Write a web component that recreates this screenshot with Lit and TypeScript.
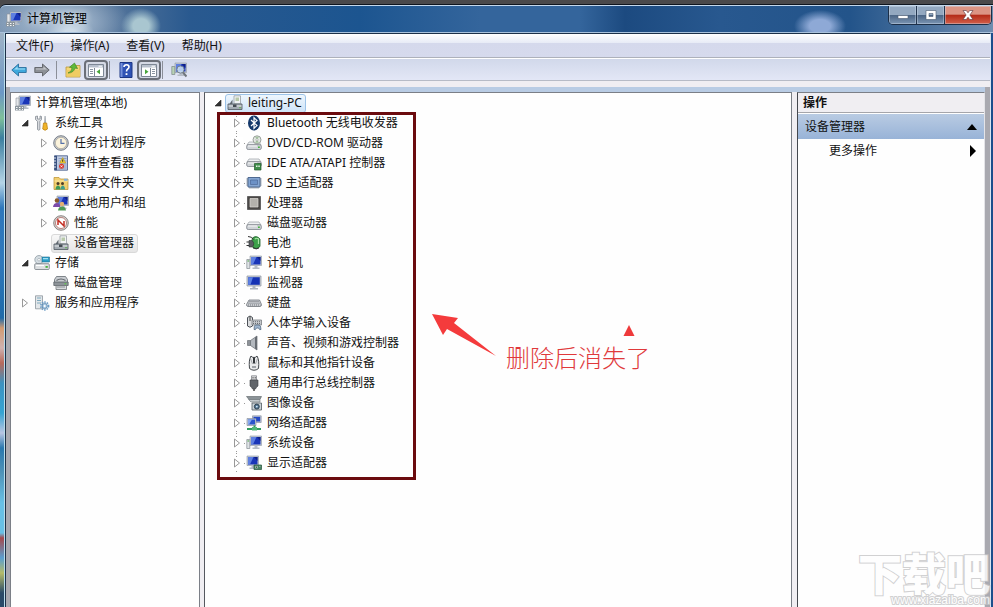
import { LitElement, html, svg, css, nothing, TemplateResult } from "lit";
import { customElement, property, state } from "lit/decorators.js";
import { classMap } from "lit/directives/class-map.js";

/* Shared pieces of the 16px device icons */
const screen = svg`
  <path d="M4 1h11.5v9.5H4z" fill="#c3cad3" stroke="#8f98a4" stroke-width=".6"/>
  <path d="M5 2h9.5v7.5H5z" fill="#1a36b8"/>
  <path d="M5 2h5.5L7 9.5H5z" fill="#5e7fe0"/>
  <path d="M11 2h3.5v4z" fill="#0e1f86"/>
  <path d="M8.500 10.500h3v2h-3zM6.500 12.500h7v1.500h-7z" fill="#b5bcc6"/>`;
const drive = svg`
  <path d="M1 9l2-3h10l2 3z" fill="#eef0f2" stroke="#9a9fa5" stroke-width=".7"/>
  <rect x=".7" y="8.700" width="14.600" height="4.800" rx="1.500" fill="#cfd3d7" stroke="#7d838a" stroke-width=".8"/>
  <path d="M2 10h9" stroke="#f8f8f8"/>
  <path d="M12 10.500h1.800v1.600H12z" fill="#45b33c"/>`;

const shapes: Record<string, TemplateResult> = {
  manage: svg`${screen}<path d="M1 3h3v8H1z" fill="#e4e7ea" stroke="#8b929b" stroke-width=".6"/>
    <path d="M0 11h9v4.500H0z" fill="#8d979f"/><path d="M1 12.500h1.500M4 12.500h1.500M7 12.500h1M1 14.500h1.500M4 14.500h1.500M7 14.500h1" stroke="#f3f5f6"/>`,
  tools: svg`<path d="M1.500 1.500v3l2 2v8q1.200 1.500 2.400 0v-8l1.600-2v-3L6 1v3H3.500V1z" fill="#d7dade" stroke="#777e86" stroke-width=".7"/>
    <path d="M10.500 1h1.200l.4 7h-2z" fill="#a6acb3"/><path d="M9.500 8h3.200l.8 6q-2.400 2.500-4.800 0z" fill="#f0b429" stroke="#b67b0c" stroke-width=".7"/>`,
  clock: svg`<circle cx="8" cy="8" r="7.300" fill="#c7ccd3" stroke="#6d747d" stroke-width=".9"/><circle cx="8" cy="8" r="5.700" fill="#fbf3dc" stroke="#9b968a" stroke-width=".6"/>
    <path d="M8 4v4.400h3.500" fill="none" stroke="#5470a8" stroke-width="1.200"/>`,
  events: svg`<path d="M1.500.8h13v14.400h-13z" fill="#bfcbe3" stroke="#50648e" stroke-width=".9"/><path d="M1.500.8h2.500v14.400H1.500z" fill="#39517f"/>
    <path d="M1 3h2M1 6h2M1 9h2M1 12h2" stroke="#e6ebf5"/>
    <path d="M5.500 3.500h8M5.500 6h8M5.500 9h8M5.500 11h8M5.500 13h8" stroke="#6f83ad" stroke-width=".6"/><path d="M9.700 2.500l3 5.500H6.700z" fill="#f6d431" stroke="#a98612" stroke-width=".5"/>
    <path d="M9.700 4.500v2.300" stroke="#333"/><circle cx="8.500" cy="11.300" r="2.500" fill="#d9372c"/><path d="M7.500 10.300l2 2m0-2l-2 2" stroke="#fff" stroke-width=".8"/>`,
  share: svg`<path d="M1 2.500h5L7.500 4H15v10.500H1z" fill="#f1cf70" stroke="#b98e2c" stroke-width=".7"/><path d="M1.500 5.500H15v1H1.500z" fill="#fbe7a3"/>
    <path d="M11 3.800h3.500v2H11z" fill="#7fb1e0"/>
    <circle cx="5" cy="8.500" r="1.500" fill="#4d3c28"/><circle cx="9.500" cy="8.500" r="1.500" fill="#4d3c28"/>
    <path d="M2.500 14.500q0-3.500 2.500-4Q7.500 11 7.500 14.500z" fill="#3f9a58"/><path d="M7.500 14.500q0-3.500 2.300-4Q12 11 12 14.500z" fill="#3f9f8c"/>`,
  users: svg`${screen}<circle cx="4" cy="5.500" r="2.300" fill="#8a5a2c"/><path d="M0 12q.5-4 4-4 3 0 3.500 4z" fill="#7b4aa8"/>
    <circle cx="9" cy="9" r="2.200" fill="#e2b072"/><path d="M5 15.500q.5-4 4-4t4 4z" fill="#4e9b56"/>`,
  perf: svg`<circle cx="8" cy="8" r="7.300" fill="#d7d4d2" stroke="#726c69" stroke-width=".8"/><circle cx="8" cy="8" r="5.500" fill="#fff" stroke="#9a4038" stroke-width=".6"/>
    <path d="M5 10V5l6 6V6" fill="none" stroke="#c22b20" stroke-width="1.500"/>`,
  devmgr: svg`<path d="M7 .8h6.500v8H7z" fill="#f2f4f5" stroke="#8b9298" stroke-width=".7"/><path d="M8.500 2.500h3.500v3.500H8.500z" fill="#b7c9a9"/>
    <path d="M2.500 9l3-4.500V9z" fill="#5f676e"/><path d="M1 9h14v5.500H1z" fill="#a3abb2" stroke="#5b636b" stroke-width=".9"/>
    <path d="M1.500 11h13" stroke="#e3e6e8"/><path d="M6 9.500h3.500v2.500H6z" fill="#454c53"/><path d="M12.300 12h1.500v1.300h-1.500z" fill="#60b34e"/>`,
  storage: svg`<circle cx="5" cy="4.700" r="4.200" fill="#d5dde2" stroke="#87939c" stroke-width=".7"/><circle cx="5" cy="4.700" r="1.300" fill="#fff" stroke="#87939c" stroke-width=".5"/>
    <path d="M8 2h7.500v5H8z" fill="#2c9fc9" stroke="#1e6d8d" stroke-width=".6"/><path d="M9 3h5v1.300H9z" fill="#9fe0f2"/>
    <rect x=".7" y="8.700" width="14.600" height="5.800" rx="1" fill="#dde0e2" stroke="#767d84" stroke-width=".8"/><path d="M2 10.500h8" stroke="#fff"/><path d="M11.500 11h2.300v1.800h-2.300z" fill="#48b13d"/>`,
  disks: svg`<path d="M1.500 4.500L3.500 1.500h9l2 3v4h-13z" fill="#c8ccd0" stroke="#666c72" stroke-width=".8"/><path d="M3.500 5.500q4.500-3 9 0" fill="none" stroke="#5d6369" stroke-width="1.200"/>
    <path d="M.8 7h14.400v3.500H.8z" fill="#8d9398" stroke="#555b60" stroke-width=".7"/><path d="M3 10.500h10.500v4H3z" fill="#d9dcde" stroke="#61676c" stroke-width=".7"/><path d="M4 12h8" stroke="#8b9095"/><path d="M11.500 8h1.800v1.500h-1.800z" fill="#63c053"/>`,
  services: svg`<path d="M1.500.8h7v13h-7z" fill="#e3e7ea" stroke="#8c959d" stroke-width=".8"/><path d="M3 3h4M3 5.500h4M3 8h4" stroke="#7fa9bd"/>
    <circle cx="10.700" cy="11" r="3.900" fill="none" stroke="#6d9dc6" stroke-width="1.600" stroke-dasharray="1.500 1"/><circle cx="10.700" cy="11" r="2.600" fill="#aecbe3" stroke="#5384ad" stroke-width=".8"/><circle cx="10.700" cy="11" r="1" fill="#fff"/>`,
  bluetooth: svg`<ellipse cx="8" cy="8" rx="6" ry="7.600" fill="#15396b"/><path d="M5 5l6 5.600L8 13.300V2.700l3 2.700L5 11" fill="none" stroke="#fff" stroke-width="1.200"/>`,
  dvd: svg`<g transform="translate(0 1)">${drive}</g><circle cx="11" cy="4.800" r="4" fill="#e2e8e2" stroke="#858c88" stroke-width=".8"/><path d="M11 4.800L9 1.800h4zM11 4.800L9 7.800h4z" fill="#a4c39f"/><circle cx="11" cy="4.800" r="1.100" fill="#fff" stroke="#888" stroke-width=".5"/>`,
  ide: svg`<g transform="translate(0 -2)">${drive}</g><path d="M8.500 8.500h6.500v6.500H8.500z" fill="#3f8d4b" stroke="#245a2d" stroke-width=".7"/><path d="M10 10.500h1.500v1.500H10zM12.300 10.500h1.500v1.500h-1.500zM10 13h3.800" fill="#e6f3e4"/>`,
  sd: svg`<path d="M2 2.500h12v9.500H2z" fill="#85a6d3" stroke="#4f6a91"/><path d="M4.500 5h7v4.500h-7z" fill="#6c91c6" stroke="#45628e" stroke-width=".6"/>
    <path d="M.5 4h1.500M.5 6h1.500M.5 8h1.500M.5 10h1.500M14 4h1.500M14 6h1.500M14 8h1.500M14 10h1.500" stroke="#5d6d83"/><path d="M4 12v1.500M6 12v1.500M8 12v1.500M10 12v1.500M12 12v1.500" stroke="#5d6d83"/>`,
  cpu: svg`<path d="M1.500 1.500h13v13h-13z" fill="#3c3b3a" stroke="#2b2b2b" stroke-dasharray="1 1"/><path d="M2 2h12v12H2z" fill="#4a4846"/><path d="M4 3.500h8v8.500H4z" fill="#b3b1ac" stroke="#dcdad6" stroke-width=".7"/>`,
  disk: svg`<g transform="translate(0 1)">${drive}</g>`,
  battery: svg`<path d="M6 3.500q4-4 8 .5v7.500q-3 3.500-7 1.500z" fill="#3da24a" stroke="#1d5d28" stroke-width=".8"/><path d="M9 4q2-1.500 3.500 0v5" fill="none" stroke="#a8e4a6" stroke-width="1.200"/>
    <path d="M.5 7h3M.5 10.500h3" stroke="#333" stroke-width="1.200"/><path d="M3 5.500h3q3.500 3.300 0 6.500H3z" fill="#5b5e62" stroke="#2e3033" stroke-width=".6"/><path d="M2 1.500q4 0 5.500 3M7 12.500q3 2.500 6 .5" fill="none" stroke="#333"/>`,
  computer: svg`${screen}<path d="M.8 4.500h3v9h-3z" fill="#dfe3e6" stroke="#858c94" stroke-width=".7"/><path d="M1.500 6h1.600" stroke="#4da544"/>`,
  monitor: svg`<path d="M1 1h14v10H1z" fill="#ccd2d9" stroke="#8a929d" stroke-width=".7"/><path d="M2.200 2.200h11.600v7.600H2.200z" fill="#1432b4"/><path d="M2.200 2.200H7L4.500 9.800H2.200z" fill="#5c80e2"/>
    <path d="M6.500 11h3v2h-3zM4 13h8v1.500H4z" fill="#adb5bf"/>`,
  keyboard: svg`<path d="M3 5h10.500l2 4.500q0 2-1.500 2H2q-1.500 0-1.500-2z" fill="#c9ccd0" stroke="#70757b" stroke-width=".8"/><path d="M3.500 6.500h10M2.500 8.200h11.500M2 10h12.500" stroke="#72777d" stroke-dasharray="1 1"/>`,
  hid: svg`<path d="M1.500 2.500q2.500-3 5 0v8.500q-2.500 2.500-5 0z" fill="#dadcde" stroke="#4b5056"/><path d="M4 1.500v4.500" stroke="#444"/><path d="M6 5h9.500v5H6z" fill="#c6c9cd" stroke="#6b7076" stroke-width=".7"/><path d="M7 6.700h8M7 8.500h8" stroke="#666b71" stroke-dasharray="1 1"/>
    <path d="M8 14.500q0-4.500 1.500-4.500h3.500q2 0 2 4.500-1.500 1-2.500-1.500h-2Q9.500 15.500 8 14.500z" fill="#9fb6cf" stroke="#4c6179" stroke-width=".7"/>`,
  sound: svg`<path d="M1.500 5.500h3v5h-3z" fill="#8d9298" stroke="#5c6167" stroke-width=".6"/><path d="M4.500 5.500L11 1v14l-6.500-4.500z" fill="#b3b8be" stroke="#666b71" stroke-width=".7"/><path d="M9 2.500L11 1v14l-2-1.500z" fill="#676c72"/>`,
  mouse: svg`<path d="M3.500 13.500Q2.500 5 5 1q1 1.500 3 1.500T11 1q2.500 4 1.500 12.500-4.500 3.500-9 0z" fill="#e8e9ea" stroke="#44484d"/><path d="M7 2.500h2v6H7z" fill="#33373b"/><path d="M4.500 3.500L6.500 9M11.500 3.500L9.500 9" stroke="#8a8e93" stroke-width=".7"/><path d="M6 11h4v2H6z" fill="#9da1a6"/>`,
  usb: svg`<path d="M5.500.8h5V5h-5z" fill="#dfe1e3" stroke="#72767b" stroke-width=".7"/><path d="M6.500 2h1v1.500h-1zM8.700 2h1v1.500h-1z" fill="#555"/><path d="M4 5h8v6q-2 1.500-2.500 3h-3Q6 12.500 4 11z" fill="#62666b" stroke="#3c3f43" stroke-width=".6"/><path d="M8 14v2" stroke="#444" stroke-width="1.500"/>`,
  imaging: svg`<path d="M.5 1.500h15l-1.500 3H3z" fill="#8b9397" stroke="#596165" stroke-width=".6"/><path d="M2.500 4.500H14V7H5z" fill="#c4cacd" stroke="#686f73" stroke-width=".6"/>
    <path d="M6 8h9.500v7H6z" fill="#cad3d8" stroke="#505a61" stroke-width=".8"/><circle cx="10.800" cy="11.600" r="2.500" fill="#4f7392" stroke="#26333e" stroke-width=".8"/><circle cx="10.800" cy="11.600" r=".9" fill="#d5e9f5"/>`,
  network: svg`<path d="M6.500.8h8.700v6.700H6.500z" fill="#c4cbd6" stroke="#7c8797" stroke-width=".6"/><path d="M7.500 1.800h6.700v4.700H7.500z" fill="#2449c6"/>
    <path d="M1 3.500h9v7H1z" fill="#c4cbd6" stroke="#7c8797" stroke-width=".6"/><path d="M2 4.500h7v5H2z" fill="#2a54cd"/><path d="M2 4.500h4L3 9.500H2z" fill="#86a7ee"/>
    <path d="M7.500 10.500h2V13h-2zM1 13h14v2H1z" fill="#2f9c5c"/><path d="M6 12h5v3.500H6z" fill="#53b97b"/>`,
  display: svg`<g transform="translate(-3 0)">${screen}</g><path d="M8 10h7.500v4.500H8z" fill="#4a8465" stroke="#24503a" stroke-width=".7"/><path d="M9.500 11.300h2v1.800h-2zM13 11.300h1.500" stroke="#cfe3d6" fill="#24352c" stroke-width=".6"/>`,
  back: svg`<path d="M.8 8l6.700-6v3.500h7.700v5H7.500V14z" fill="#3fa9dd" stroke="#2b6f9d" stroke-width=".9"/><path d="M3 7.500L6.500 4.500v2h7.500v1z" fill="#a5dff6"/>`,
  forward: svg`<path d="M15.200 8L8.500 2v3.500H.8v5h7.700V14z" fill="#8d9197" stroke="#5d6167" stroke-width=".9"/><path d="M13 7.500L9.500 4.500v2H2v1z" fill="#c3c6cb"/>`,
  up: svg`<path d="M1 5h5l1-1.500h8V15H1z" fill="#f4d777" stroke="#b9953a" stroke-width=".8"/><path d="M1.500 8H15v6.500H1.500z" fill="#efcc63"/><path d="M3 11Q7 10 7 5.500L4.500 5.200 9.500 1l3 5.500-2.500-.4Q8.500 11 3 11z" fill="#5fb93c" stroke="#34801d" stroke-width=".6"/>`,
  paneLeft: svg`<path d="M.5 2.500h15v12H.5z" fill="#fff" stroke="#7d8794"/><path d="M1 3h14v2.500H1z" fill="#b8c0cc"/><path d="M10.500 4.200h3.500" stroke="#fff"/><path d="M6.500 6v8.500" stroke="#7d8794"/><path d="M2 7.500h3M2 9.500h3M2 11.500h3" stroke="#8b95a2"/><path d="M12 7.200v5L8.500 9.700z" fill="#48a53a"/>`,
  paneRight: svg`<path d="M.5 2.500h15v12H.5z" fill="#fff" stroke="#7d8794"/><path d="M1 3h14v2.500H1z" fill="#b8c0cc"/><path d="M10.500 4.200h3.500" stroke="#fff"/><path d="M9.500 6v8.500" stroke="#7d8794"/><path d="M11 7.500h3M11 9.500h3M11 11.500h3" stroke="#8b95a2"/><path d="M4 7.200v5l3.500-2.500z" fill="#48a53a"/>`,
  help: svg`<path d="M2 .5h12v15H2z" fill="#2f52b5" stroke="#1c3685"/><path d="M2.500 1h2v14h-2z" fill="#7490dc"/><path d="M6 5q0-2.300 2.500-2.300T11 5q0 1.300-1.500 2.200-1 .6-1 2.300" fill="none" stroke="#fff" stroke-width="1.600"/><path d="M7.600 11.200h1.800V13H7.600z" fill="#fff"/>`,
  scan: svg`${screen}<path d="M.8 4.500h3v8h-3z" fill="#b8d3b4" stroke="#7c8788" stroke-width=".7"/><circle cx="9.500" cy="7.500" r="3.600" fill="#cfe5f6" fill-opacity=".85" stroke="#75828f"/><path d="M12 10.500l3.500 4" stroke="#70767d" stroke-width="2"/>`,
};

const icon = (name: string) =>
  html`<svg class="icon" viewBox="0 0 16 16" aria-hidden="true">${shapes[name]}</svg>`;

interface Node {
  label: string;
  icon: string;
  open?: boolean;
  selected?: boolean;
  children?: Node[];
}

const leaf = (icon: string, label: string): Node => ({ icon, label, children: [] });

const consoleTree: Node = {
  label: "计算机管理(本地)",
  icon: "manage",
  open: true,
  children: [
    {
      label: "系统工具", icon: "tools", open: true,
      children: [
        leaf("clock", "任务计划程序"),
        leaf("events", "事件查看器"),
        leaf("share", "共享文件夹"),
        leaf("users", "本地用户和组"),
        leaf("perf", "性能"),
        { label: "设备管理器", icon: "devmgr", selected: true },
      ],
    },
    { label: "存储", icon: "storage", open: true, children: [{ label: "磁盘管理", icon: "disks" }] },
    leaf("services", "服务和应用程序"),
  ],
};

const deviceTree: Node = {
  label: "leiting-PC",
  icon: "devmgr",
  open: true,
  selected: true,
  children: [
    leaf("bluetooth", "Bluetooth 无线电收发器"),
    leaf("dvd", "DVD/CD-ROM 驱动器"),
    leaf("ide", "IDE ATA/ATAPI 控制器"),
    leaf("sd", "SD 主适配器"),
    leaf("cpu", "处理器"),
    leaf("disk", "磁盘驱动器"),
    leaf("battery", "电池"),
    leaf("computer", "计算机"),
    leaf("monitor", "监视器"),
    leaf("keyboard", "键盘"),
    leaf("hid", "人体学输入设备"),
    leaf("sound", "声音、视频和游戏控制器"),
    leaf("mouse", "鼠标和其他指针设备"),
    leaf("usb", "通用串行总线控制器"),
    leaf("imaging", "图像设备"),
    leaf("network", "网络适配器"),
    leaf("computer", "系统设备"),
    leaf("display", "显示适配器"),
  ],
};

const base = css`
  * { box-sizing: border-box; }
  button {
    font: inherit;
    color: inherit;
    background: none;
    border: 0;
    margin: 0;
    padding: 0;
  }
  .icon { width: 16px; height: 16px; flex: none; display: block; }
`;

@customElement("tree-view")
class TreeView extends LitElement {
  @property({ attribute: false }) root!: Node;
  @property({ type: Boolean }) lines = false;
  @property({ type: Boolean }) rootToggle = false;
  @state() private toggled = new Set<Node>();

  static styles = [base, css`
    :host { display: block; }
    ul { list-style: none; margin: 0; padding: 0; }
    ul ul { padding-left: 19px; }
    .bare > ul > li > ul { padding-left: 6px; }
    .row { display: flex; align-items: center; height: 20px; }
    .twisty, .blank { width: 12px; height: 12px; margin-right: 1px; flex: none; }
    .twisty { display: flex; align-items: center; justify-content: center; }
    .twisty svg { width: 8px; height: 10px; }
    .label {
      display: flex;
      align-items: center;
      gap: 5px;
      height: 19px;
      padding: 0 3px 0 1px;
      border: 1px solid transparent;
      border-radius: 3px;
      white-space: nowrap;
    }
    .selected { border-color: #d9d9d9; background: linear-gradient(#f8f8f8, #e5e5e5); }
    .lines .selected { border-color: #9cc3e8; background: linear-gradient(#eef6fd, #cfe4f8); }
    .lines ul ul .row {
      background:
        repeating-linear-gradient(#999 0 1px, transparent 1px 3px) 5px 0 / 1px 20px no-repeat,
        repeating-linear-gradient(90deg, #999 0 1px, transparent 1px 2px) 11px 10px / 4px 1px no-repeat;
    }
    .lines .twisty { background: #fff; }
  `];

  private toggle(node: Node) {
    const next = new Set(this.toggled);
    next.has(node) ? next.delete(node) : next.add(node);
    this.toggled = next;
  }

  private node(n: Node, isRoot: boolean): TemplateResult {
    const open = !!n.open !== this.toggled.has(n);
    const arrow = open
      ? svg`<path d="M7 2v6H1z" fill="#333" stroke="#222" stroke-width=".6"/>`
      : svg`<path d="M1.500 1v8L6.500 5z" fill="#fff" stroke="#999"/>`;
    const toggle = n.children
      ? html`<button class="twisty" aria-label=${`${open ? "折叠" : "展开"} ${n.label}`} @click=${() => this.toggle(n)}>
          <svg viewBox="0 0 8 10">${arrow}</svg></button>`
      : html`<span class="blank"></span>`;
    return html`<li>
      <div class="row">
        ${isRoot && !this.rootToggle ? nothing : toggle}
        <button class=${classMap({ label: true, selected: !!n.selected })}>${icon(n.icon)}<span>${n.label}</span></button>
      </div>
      ${open && n.children?.length ? html`<ul>${n.children.map((c) => this.node(c, false))}</ul>` : nothing}
    </li>`;
  }

  render() {
    return html`<div class=${classMap({ lines: this.lines, bare: !this.rootToggle })}>
      <ul>${this.node(this.root, true)}</ul>
    </div>`;
  }
}

@customElement("app-root")
class AppRoot extends LitElement {
  static styles = [base, css`
    :host {
      display: block;
      font: 12px/16px "Noto Sans", "Noto Sans CJK SC", sans-serif;
      color: #111;
    }
    .desktop {
      display: flex;
      flex-direction: column;
      height: 100vh;
      overflow: hidden;
      border-top: 4px solid #4a494b;
      background: #4a494b;
    }
    .window {
      flex: 1;
      min-height: 0;
      display: flex;
      flex-direction: column;
      border-top: 1px solid #10161f;
      border-radius: 6px 0 0 0;
      background: #28588e;
    }
    .title {
      height: 28px;
      flex: none;
      display: flex;
      align-items: flex-start;
      border-top: 1px solid #c4d8ec;
      border-bottom: 1px solid #a9c2dc;
      border-radius: 6px 0 0 0;
      padding-left: 6px;
      background:
        radial-gradient(20px 18px at 141px 20px, #a9c6d0 0 40%, transparent),
        radial-gradient(24px 14px at 70px 26px, #cddbe8 20%, transparent),
        radial-gradient(70px 34px at 60px 16px, #9fb5cc 30%, transparent),
        radial-gradient(26px 16px at 820px 20px, #8ea9d6 40%, transparent),
        linear-gradient(90deg, #7993b0 0, #66809f 80px, #29598f 190px, #1c5590 360px, #34659c 480px, #34659c 580px, #1c4a80 625px, #28588f 720px, #23548a 850px, #6f8db0);
    }
    .caption {
      flex: 1;
      display: flex;
      align-items: center;
      gap: 5px;
      height: 26px;
      margin: 0;
      font: inherit;
      color: #000;
      text-shadow: 0 0 6px #fff8, 0 0 8px #fff8;
    }
    .controls {
      display: flex;
      margin-right: 1px;
      border: 1px solid #1c2f48;
      border-top: 0;
      border-radius: 0 0 5px 5px;
      overflow: hidden;
    }
    .controls button {
      width: 28px;
      height: 18px;
      display: flex;
      align-items: center;
      justify-content: center;
      border-right: 1px solid #23364f;
      background: linear-gradient(#93a8c0 0 48%, #4b6585 52%, #7b95b3);
      box-shadow: inset 0 0 0 1px #d5e2f066;
    }
    .controls .close { width: 46px; border: 0; background: linear-gradient(#dc9484 0 45%, #b52c19 52%, #d3604a); }
    .controls svg { width: 14px; height: 12px; }
    .frame { flex: 1; min-height: 0; display: flex; background: #1c4f8c; }
    .edge {
      width: 5px;
      flex: none;
      border-right: 1px solid #b9dcea;
      background: linear-gradient(#9fb3c6 0, #6c97c5 60px, #7fc09a 85px, #3c7fa0 105px, #b5d4e6 150px, #2e77bb 175px, #2f78bb 230px, #1f6aa8 285px, #d29b72 295px, #cfb2b0 315px, #b8695a 330px, #3d92c0 350px, #35a4d3 380px, #b9c5e2 400px, #2a78ae 415px, #4f93b8 440px, #68c0e5 470px, #68c0e5 500px, #a5494c 505px, #5a9fd0 525px, #b5bb6a 540px, #2a4a68 560px, #2a4a68);
    }
    .client {
      flex: 1;
      min-width: 0;
      display: flex;
      flex-direction: column;
      border: 1px solid #1c3048;
      border-bottom: 0;
      border-right: 1px solid #d9e6f2;
      margin-right: 2px;
      background: #f0eef2;
    }
    .menu {
      height: 24px;
      flex: none;
      display: flex;
      align-items: center;
      gap: 17px;
      padding: 0 10px;
      border-bottom: 1px solid #adb1bb;
      background: linear-gradient(#fff, #e7ebf6 9px, #d5d9ec 9px, #d6daed);
    }
    .toolbar {
      height: 23px;
      flex: none;
      display: flex;
      align-items: center;
      padding-left: 5px;
      border-top: 1px solid #fff;
      border-bottom: 1px solid #b7bbc6;
      background: linear-gradient(#d1d8ea, #e3e7f6);
    }
    .history { display: flex; gap: 7px; margin-right: 6px; }
    .tool { margin-right: 3px; }
    .sep { width: 1px; height: 18px; background: #8b8f99; margin-right: 8px; }
    .toggle {
      width: 24px;
      height: 20px;
      display: flex;
      align-items: center;
      justify-content: center;
      margin-right: 1px;
      border: 2px solid #6b6f78;
      border-radius: 4px;
      background: #d5d9e4;
    }
    .body {
      flex: 1;
      min-height: 0;
      margin-top: 6px;
      padding-top: 5px;
      display: flex;
      border: solid #a9a9b0;
      border-width: 0 5px 0 4px;
      background: linear-gradient(#b9cce4 5px, #f0eef2 5px);
    }
    .pane {
      background: #fefefe;
      border: 1px solid #7b7f87;
      border-bottom: 0;
      min-height: 0;
    }
    .nav { width: 190px; flex: none; margin-right: 4px; padding-left: 2px; }
    .main { flex: 1; min-width: 0; margin-right: 5px; position: relative; padding-left: 7px; border-left-color: #55585f; }
    .actions { width: 188px; flex: none; border-left: 1px solid #44474d; border-right-color: #e4e4e8; }
    .mark {
      position: absolute;
      left: 12px;
      top: 19px;
      width: 199px;
      height: 368px;
      border: 3px solid #6b0b0e;
      pointer-events: none;
    }
    .arrow { position: absolute; left: 226px; top: 220px; width: 68px; height: 46px; }
    .note {
      position: absolute;
      left: 301px;
      top: 248px;
      margin: 0;
      font: 300 24px/32px "Noto Sans CJK SC", sans-serif;
      color: #e0393b;
      white-space: nowrap;
    }
    .peak { position: absolute; left: 418px; top: 232px; width: 12px; height: 11px; }
    .actions h2 {
      margin: 0;
      height: 20px;
      padding: 1px 5px;
      font: bold 12px/18px "Noto Sans", "Noto Sans CJK SC", sans-serif;
      background: #f0eef2;
      border-bottom: 1px solid #a5a5aa;
    }
    .group, .more {
      width: 100%;
      height: 25px;
      display: flex;
      align-items: center;
      justify-content: space-between;
      padding: 0 7px;
    }
    .group { margin-top: 1px; background: linear-gradient(#b9cbe3, #98b3d7); }
    .more { height: 24px; padding-left: 31px; }
    .actions svg { width: 10px; height: 12px; }
    .brand {
      position: absolute;
      right: 3px;
      bottom: 0;
      display: flex;
      flex-direction: column;
      align-items: flex-end;
      color: #ffffff;
      -webkit-text-stroke: 2px #c6c6c8;
      paint-order: stroke;
      opacity: .8;
      pointer-events: none;
    }
    .brand b { font: 900 44px/44px "Noto Sans CJK SC", sans-serif; }
    .brand span { font: 12px/13px "Liberation Sans", sans-serif; }
  `];

  render() {
    return html`
      <div class="desktop">
        <div class="window">
          <header class="title">
            <h1 class="caption">${icon("manage")}<span>计算机管理</span></h1>
            <div class="controls">
              <button aria-label="最小化"><svg viewBox="0 0 14 12"><path d="M2 6.500h10v3H2z" fill="#fff" stroke="#4a5a70" stroke-width=".6"/></svg></button>
              <button aria-label="最大化"><svg viewBox="0 0 14 12"><path d="M2 1.500h10v9H2zM5 4.500v3h4v-3z" fill="#fff" fill-rule="evenodd" stroke="#4a5a70" stroke-width=".6"/></svg></button>
              <button class="close" aria-label="关闭"><svg viewBox="0 0 14 12"><path d="M2 1.500h3.300L7 3.800l1.700-2.300H12L8.900 6l3.100 4.500H8.700L7 8.200l-1.700 2.300H2L5.100 6z" fill="#fff" stroke="#5b3038" stroke-width=".6"/></svg></button>
            </div>
          </header>
          <div class="frame">
            <div class="edge"></div>
            <div class="client">
              <nav class="menu">
                ${["文件(F)", "操作(A)", "查看(V)", "帮助(H)"].map((m) => html`<button>${m}</button>`)}
              </nav>
              <div class="toolbar">
                <div class="history">
                  <button aria-label="后退">${icon("back")}</button>
                  <button aria-label="前进">${icon("forward")}</button>
                </div>
                <span class="sep"></span>
                <button class="tool" aria-label="上移一级">${icon("up")}</button>
                <button class="toggle" aria-label="显示/隐藏控制台树" aria-pressed="true">${icon("paneLeft")}</button>
                <span class="sep"></span>
                <button class="tool" aria-label="帮助">${icon("help")}</button>
                <button class="toggle" aria-label="显示/隐藏操作窗格" aria-pressed="true">${icon("paneRight")}</button>
                <span class="sep"></span>
                <button class="tool" aria-label="扫描检测硬件改动">${icon("scan")}</button>
              </div>
              <div class="body">
                <div class="pane nav"><tree-view .root=${consoleTree}></tree-view></div>
                <main class="pane main">
                  <tree-view lines rootToggle .root=${deviceTree}></tree-view>
                  <div class="mark"></div>
                  <svg class="arrow" viewBox="0 0 68 46" aria-hidden="true"><path d="M1 1l26 4-4 5 42 33L16 16l-4 6z" fill="#f43b3c"/></svg>
                  <p class="note">删除后消失了</p>
                  <svg class="peak" viewBox="0 0 12 11" aria-hidden="true"><path d="M6 0l5.500 11H.5z" fill="#ee3a3b"/></svg>
                </main>
                <aside class="pane actions">
                  <h2>操作</h2>
                  <button class="group">设备管理器<svg viewBox="0 0 10 12"><path d="M5 3l5 6H0z"/></svg></button>
                  <button class="more">更多操作<svg viewBox="0 0 10 12"><path d="M3 0l6 6-6 6z"/></svg></button>
                </aside>
              </div>
            </div>
          </div>
        </div>
        <div class="brand"><b>下载吧</b><span>www.xiazaiba.com</span></div>
      </div>
    `;
  }
}
